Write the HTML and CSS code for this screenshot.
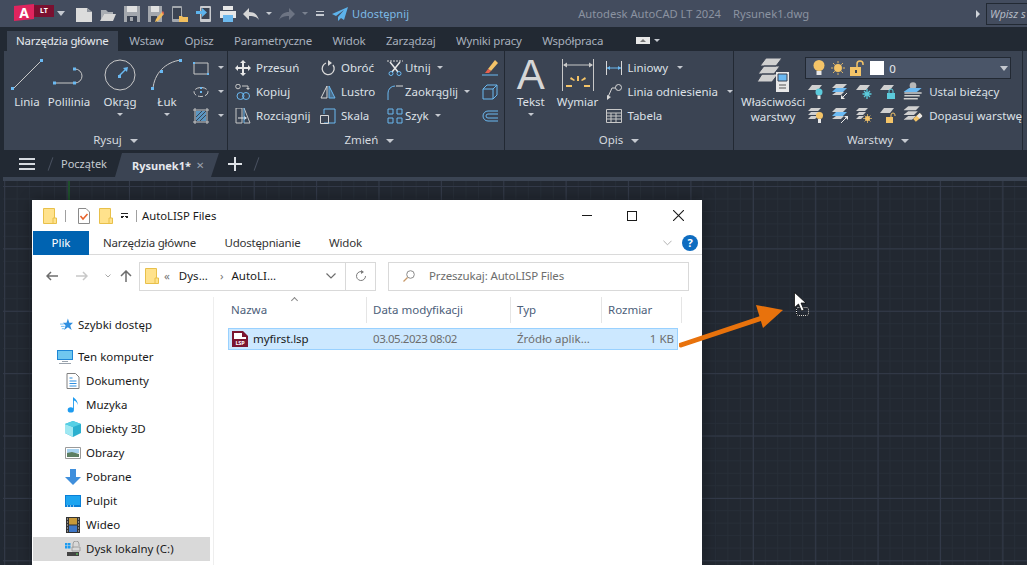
FILE: index.html
```html
<!DOCTYPE html>
<html lang="pl">
<head>
    <meta charset="UTF-8">
    <title>AutoCAD LT 2024</title>
    <link rel="stylesheet" href="styles.css">
</head>
<body>
<svg class="defs">
    <symbol id="i-new" viewBox="0 0 16 16"><path d="M0 2h11l5 4v10H0z" fill="#dcdcdc"/><path d="M11 2l5 4h-5z" fill="#8d929b"/></symbol>
    <symbol id="i-open" viewBox="0 0 16 16"><path d="M1 4h5l2 2h5v2H4l-3 6z" fill="#a9adb3"/><path d="M4 8h12l-3 7H0z" fill="#d6d6d6"/></symbol>
    <symbol id="i-save" viewBox="0 0 16 18"><path d="M0 1h16v16H0z" fill="#a3a7ad"/><path d="M3 1h10v6H3z" fill="#e0e0e0"/><path d="M3 11h10v6H3z" fill="#3b4352"/><path d="M6 12h3v4H6z" fill="#a3a7ad"/></symbol>
    <symbol id="i-saveas" viewBox="0 0 16 18"><path d="M0 1h14v16H0z" fill="#a3a7ad"/><path d="M3 1h8v6H3z" fill="#e0e0e0"/><path d="M3 11h6v6H3z" fill="#3b4352"/><path d="M8 14l6-7 2 2-6 7-3 1z" fill="#f2bf5e"/><path d="M14 7l1-1 1 2-1 2z" fill="#e8604c"/></symbol>
    <symbol id="i-phone-open" viewBox="0 0 16 18"><rect x="0" y="1" width="10" height="16" rx="1" fill="#a3a7ad"/><path d="M1 3h8v11H1z" fill="#3b4352"/><path d="M7 11h3l1 1h5v5H7z" fill="#f2bf5e"/></symbol>
    <symbol id="i-phone-save" viewBox="0 0 16 18"><rect x="4" y="1" width="11" height="16" rx="1" fill="#c9cbcf"/><path d="M5.500 3h8v11h-8z" fill="#3b4352"/><path d="M0 6h6V3l5 4.500L6 12V9H0z" fill="#5db3ec"/></symbol>
    <symbol id="i-print" viewBox="0 0 16 16"><path d="M3 0h10v4H3z" fill="#e8e8e8"/><path d="M0 5h16v7H0z" fill="#e8e8e8"/><path d="M3 9h10v7H3z" fill="#6db9ee"/></symbol>
    <symbol id="i-undo" viewBox="0 0 16 12"><path d="M6 0v4c5 0 8 2 10 8-2-3-5-4-10-4v4L0 6z" fill="#d6d6d6"/></symbol>
    <symbol id="i-redo" viewBox="0 0 16 12"><path d="M10 0v4C5 4 2 6 0 12c2-3 5-4 10-4v4l6-6z" fill="#6d7483"/></symbol>
    <symbol id="i-plane" viewBox="0 0 16 14"><path d="M16 0L0 7l4 2 8-6-6 7v4l3-3 3 2z" fill="#5db3ec"/></symbol>

    <symbol id="i-line" viewBox="0 0 32 32"><path d="M2 30L30 2" stroke="#c8c8c8" fill="none"/><path d="M0 28h3v3H0zM29 0h3v3h-3z" fill="#6ab9f2"/></symbol>
    <symbol id="i-pline" viewBox="0 0 32 32"><path d="M1 24h21a7 7 0 0 0 0-14h-2" stroke="#c8c8c8" fill="none"/><path d="M0 22.500h3v3H0zM20 22.500h3v3h-3zM20 8.500h3v3h-3z" fill="#6ab9f2"/></symbol>
    <symbol id="i-circle" viewBox="0 0 32 32"><circle cx="16" cy="16" r="15" stroke="#c8c8c8" fill="none"/><path d="M15 17l7-7" stroke="#6ab9f2" stroke-width="1.500"/><path d="M24 8l-5 1 4 4z" fill="#6ab9f2"/><path d="M14 16h3v3h-3z" fill="#6ab9f2"/></symbol>
    <symbol id="i-arc" viewBox="0 0 32 32"><path d="M2 30C3 15 14 3 30 1" stroke="#c8c8c8" fill="none"/><path d="M0 28h3v3H0zM9 11h3v3H9zM28 0h3v3h-3z" fill="#6ab9f2"/></symbol>
    <symbol id="i-rect" viewBox="0 0 16 16"><path d="M1 3h14v11H1z" stroke="#c8c8c8" fill="none"/><path d="M0 2h2v2H0zM14 13h2v2h-2z" fill="#6ab9f2"/></symbol>
    <symbol id="i-ellipse" viewBox="0 0 16 16"><ellipse cx="8" cy="8" rx="7" ry="4.500" stroke="#c8c8c8" fill="none" stroke-dasharray="5 2"/><path d="M7 3h2v2H7zM7 7h2v2H7z" fill="#6ab9f2"/></symbol>
    <symbol id="i-hatch" viewBox="0 0 16 16"><path d="M0 2h16M0 14h16M2 0v16M14 0v16" stroke="#c8c8c8" fill="none"/><path d="M3 3h10v10H3z" fill="#6ab9f2" opacity=".7"/><path d="M3 9l6-6M3 13l10-10M7 13l6-6" stroke="#3b4352"/></symbol>

    <symbol id="i-move" viewBox="0 0 16 16"><path d="M8 0l3 3H9v4h4V5l3 3-3 3V9H9v4h2l-3 3-3-3h2V9H3v2L0 8l3-3v2h4V3H5z" fill="#e8e8e8"/></symbol>
    <symbol id="i-copy" viewBox="0 0 16 16"><circle cx="3" cy="2.500" r="2.300" stroke="#c8c8c8" fill="none"/><path d="M7 2h6v3" stroke="#c8c8c8" fill="none"/><path d="M11 4l2 2 2-2z" fill="#c8c8c8"/><circle cx="5.500" cy="12" r="3.500" stroke="#6ab9f2" fill="none"/><circle cx="11" cy="12" r="3.500" stroke="#6ab9f2" fill="none"/></symbol>
    <symbol id="i-stretch" viewBox="0 0 16 16"><path d="M1 0h6v15H1zM9 0l6 15H9" stroke="#c8c8c8" fill="none"/><path d="M3 10h7" stroke="#e8e8e8"/><path d="M12 10l-3-2v4z" fill="#e8e8e8"/><path d="M9 0v15" stroke="#6ab9f2"/></symbol>
    <symbol id="i-rotate" viewBox="0 0 16 16"><path d="M6 3a6 6 0 1 0 7 2" stroke="#d8d8d8" stroke-width="1.300" fill="none"/><path d="M8 0l4 3-4 3z" fill="#d8d8d8"/></symbol>
    <symbol id="i-mirror" viewBox="0 0 16 16"><path d="M7 2v12H1z" stroke="#d8d8d8" fill="none"/><path d="M9 2v12h6z" stroke="#6ab9f2" fill="#6ab9f2" fill-opacity=".35"/></symbol>
    <symbol id="i-scale" viewBox="0 0 16 16"><path d="M4 1h11v14H4" stroke="#6ab9f2" fill="none"/><path d="M4 1v5" stroke="#6ab9f2"/><path d="M0.500 7.500h8v8h-8z" stroke="#d8d8d8" fill="none"/></symbol>
    <symbol id="i-trim" viewBox="0 0 16 16"><path d="M0 1h16" stroke="#d8d8d8" stroke-dasharray="2 1"/><path d="M3 2l8 10M13 2L5 12" stroke="#e8e8e8" stroke-width="1.500"/><circle cx="4" cy="13.500" r="2" stroke="#6ab9f2" fill="none"/><circle cx="12" cy="13.500" r="2" stroke="#6ab9f2" fill="none"/></symbol>
    <symbol id="i-fillet" viewBox="0 0 16 16"><path d="M1 16V9a7 7 0 0 1 7-7" stroke="#6ab9f2" fill="none"/><path d="M9 2h7" stroke="#d8d8d8"/></symbol>
    <symbol id="i-array" viewBox="0 0 16 16"><path d="M1 1h5v5H1zM10 1h5v5h-5zM1 10h5v5H1zM10 10h5v5h-5z" stroke="#6ab9f2" fill="none"/></symbol>
    <symbol id="i-erase" viewBox="0 0 16 16"><path d="M13 0l3 3-7 8-3-2z" fill="#f4c468"/><path d="M6 9l3 2-2 2H3z" fill="#e8604c"/><path d="M0 15h16" stroke="#6ab9f2"/></symbol>
    <symbol id="i-box" viewBox="0 0 16 16"><path d="M1 5h10v10H1zM1 5l4-4h10v10l-4 4M11 5l4-4" stroke="#6ab9f2" fill="none"/></symbol>
    <symbol id="i-offset" viewBox="0 0 16 16"><path d="M16 3H6a5 5 0 0 0 0 10h10M16 6H6a2 2 0 0 0 0 4h10" stroke="#6ab9f2" fill="none"/></symbol>

    <symbol id="i-dim" viewBox="0 0 32 32"><path d="M.500 0v32M31.500 0v32" stroke="#c8c8c8"/><path d="M2 6h28" stroke="#c8c8c8"/><path d="M1 6l4-2.500v5zM31 6l-4-2.500v5z" fill="#c8c8c8"/><path d="M15 17h2v5h-2zM8 20l1-2 4 3-1 1zM24 20l-1-2-4 3 1 1zM4 28h6v-2H4zM22 28h6v-2h-6z" fill="#f4c468"/></symbol>
    <symbol id="i-linear" viewBox="0 0 16 16"><path d="M.500 1v14M15.500 1v14" stroke="#d8d8d8"/><path d="M1 8h14" stroke="#6ab9f2"/><path d="M1 8l3-2v4zM15 8l-3-2v4z" fill="#6ab9f2"/></symbol>
    <symbol id="i-leader" viewBox="0 0 16 16"><circle cx="12.500" cy="3.500" r="3" stroke="#d8d8d8" fill="none"/><path d="M9.500 4H6L2 13" stroke="#d8d8d8" fill="none"/><path d="M1 16l0-5 4 2z" fill="#d8d8d8"/></symbol>
    <symbol id="i-table" viewBox="0 0 16 16"><path d="M.500 1.500h15v13H.500zM.500 5h15M.500 8h15M.500 11h15M5 5v9M10 5v9" stroke="#c8c8c8" fill="none"/></symbol>

    <symbol id="i-layers" viewBox="0 0 32 36"><path d="M9 0h16l-6 8H3zM7 8h16l-6 8H1zM5 16h16l-6 8H0z" fill="#d0d0d0" stroke="#3b4352"/><path d="M19 14h13v20H19z" fill="#e8e8e8"/><path d="M21 16h9v7h-9z" fill="#6ab9f2" stroke="#3b4352"/><path d="M22 27h7M22 30h7" stroke="#555"/></symbol>
    <symbol id="i-bulb" viewBox="0 0 12 16"><circle cx="6" cy="5.500" r="5.500" fill="#f4c468"/><path d="M3.500 11h5v4h-5z" fill="#e8e8e8"/></symbol>
    <symbol id="i-sun" viewBox="0 0 16 16"><circle cx="8" cy="8" r="4.500" fill="#f4c468"/><path d="M8 0v2.500M8 13.500V16M0 8h2.500M13.500 8H16M2.300 2.300l2 2M11.700 11.700l2 2M13.700 2.300l-2 2M4.300 11.700l-2 2" stroke="#f4c468"/></symbol>
    <symbol id="i-unlock" viewBox="0 0 14 16"><path d="M0 7h11v9H0z" fill="#f4c468"/><path d="M7 7V4a3 3 0 0 1 6 0v1" stroke="#f4c468" stroke-width="1.500" fill="none"/><path d="M5 10h2v3H5z" fill="#3b4352"/></symbol>
    <symbol id="i-lay-a" viewBox="0 0 16 16"><path d="M4 2h10l-4 5H0z" fill="#d0d0d0"/><circle cx="11" cy="9" r="3.500" fill="#5ccbdc"/><path d="M9.500 12.500h3V16h-3z" fill="#e8e8e8"/></symbol>
    <symbol id="i-lay-b" viewBox="0 0 16 16"><path d="M4 1h11l-4 4H0z" fill="#d0d0d0"/><path d="M4 5h11l-4 4H0z" fill="#6ab9f2"/><path d="M4 9h8l-3 3H0z" fill="#d0d0d0"/><path d="M15 10l-5 5" stroke="#e8e8e8"/><path d="M9 16v-4l4 4z" fill="#e8e8e8"/></symbol>
    <symbol id="i-lay-c" viewBox="0 0 16 16"><path d="M4 2h10l-4 5H0z" fill="#d0d0d0"/><path d="M11 6v10M6.500 11h9M8 8l6 6M14 8l-6 6" stroke="#5ccbdc" stroke-width="1.300"/></symbol>
    <symbol id="i-lay-d" viewBox="0 0 16 16"><path d="M4 2h10l-4 5H0z" fill="#d0d0d0"/><path d="M7 10h8v6H7z" fill="#5ccbdc"/><path d="M9 10V8a2 2 0 0 1 4 0v2" stroke="#5ccbdc" fill="none"/></symbol>
    <symbol id="i-lay-e" viewBox="0 0 20 18"><circle cx="10" cy="3.500" r="3.500" fill="#b8b8b8"/><path d="M6 6h13l-5 4H0z" fill="#6ab9f2"/><path d="M1 11h18M1 14h16M0 17h15" stroke="#d0d0d0" stroke-width="1.500"/></symbol>
    <symbol id="i-lay-f" viewBox="0 0 16 16"><path d="M3 1h10l-3 3H0zM3 5h9l-3 3H0zM3 9h7l-3 3H0z" fill="#d0d0d0"/><circle cx="11.500" cy="8.500" r="3.500" fill="#f4c468"/><path d="M10 12h3v4h-3z" fill="#e8e8e8"/></symbol>
    <symbol id="i-lay-g" viewBox="0 0 16 16"><path d="M4 1h11l-4 4H0z" fill="#d0d0d0"/><path d="M4 5h11l-4 4H0z" fill="#6ab9f2"/><path d="M4 9h8l-3 3H0z" fill="#d0d0d0"/><path d="M9 16l5-5" stroke="#e8e8e8"/><path d="M16 9v4l-4-4z" fill="#e8e8e8"/></symbol>
    <symbol id="i-lay-h" viewBox="0 0 16 16"><path d="M3 1h9l-3 3H0zM3 5h7l-3 3H0zM3 9h5l-3 3H0z" fill="#d0d0d0"/><circle cx="11.500" cy="11.500" r="2.500" fill="#f4c468"/><path d="M11.500 7v9M7 11.500h9M8.500 8.500l6 6M14.500 8.500l-6 6" stroke="#f4c468" stroke-width=".7"/></symbol>
    <symbol id="i-lay-i" viewBox="0 0 16 16"><path d="M4 1h10l-4 5H0z" fill="#d0d0d0"/><path d="M6 10h7v6H6z" fill="#f4c468"/><path d="M11 10V8a2 2 0 0 1 4 0v1" stroke="#f4c468" fill="none"/></symbol>
    <symbol id="i-lay-j" viewBox="0 0 20 18"><path d="M5 0h12l-4 4H0zM5 5h10l-4 4H0zM5 10h8l-4 4H0z" fill="#d0d0d0"/><path d="M10 13l7-6 3 3-7 6z" fill="#f4c468"/><path d="M14 10l3-3 3 3-3 3z" fill="#e8e8e8"/></symbol>

    <symbol id="e-folder" viewBox="0 0 14 16"><path d="M.500.500h11v15H.500z" fill="#ffe28c" stroke="#e8c04a"/><path d="M10 10h3.500v5.500H10z" fill="#ffe28c" stroke="#e8c04a"/></symbol>
    <symbol id="e-check" viewBox="0 0 12 16"><path d="M.500.500H8L11.500 4v11.500H.500z" fill="#fff" stroke="#8a8a8a"/><path d="M2.500 8l2.500 3 4.500-5" stroke="#e8622a" stroke-width="1.500" fill="none"/></symbol>
    <symbol id="e-star" viewBox="0 0 14 14"><path d="M8.500 0l1.500 4.500h4L11 7.500l1.500 5-4-3-4 3 1.500-5L3 4.500h4z" fill="#2f8fe0"/><path d="M0 6h4M1 8.500h4M2 11h3" stroke="#6ab9f2"/></symbol>
    <symbol id="e-pc" viewBox="0 0 16 16"><path d="M0 1h16v10H0z" fill="#1d86d6"/><path d="M1 2h14v8H1z" fill="#6fc7ef"/><path d="M5 12h6v1H5zM2 14h12v1H2z" fill="#9aa3ad"/></symbol>
    <symbol id="e-doc" viewBox="0 0 13 16"><path d="M.500.500H9L12.500 4v11.500H.500z" fill="#fff" stroke="#808080"/><path d="M3 5h3M3 8h7M3 10.500h7M3 13h7" stroke="#2f8fe0"/></symbol>
    <symbol id="e-note" viewBox="0 0 12 18"><ellipse cx="3.500" cy="14.500" rx="3.500" ry="3" fill="#1d9bf0"/><path d="M6 2v12H7V4c2 .500 4 2 4 5 1-3-1-6-5-9z" fill="#1d9bf0"/></symbol>
    <symbol id="e-cube" viewBox="0 0 16 16"><path d="M8 0l8 3v9l-8 4-8-4V3z" fill="#2bb0cf"/><path d="M0 3l8 3v10l-8-4z" fill="#9fe8f2"/><path d="M8 6l8-3-8-3-8 3z" fill="#56d0e5"/></symbol>
    <symbol id="e-pic" viewBox="0 0 16 12"><path d="M.500.500h15v11H.500z" fill="#fff" stroke="#9a9a9a"/><path d="M2 2h12v4H2z" fill="#a8d3f0"/><path d="M2 6l5-1 7 2v3H2z" fill="#5d7f63"/></symbol>
    <symbol id="e-down" viewBox="0 0 16 16"><path d="M5 0h6v8h5l-8 8-8-8h5z" fill="#3f8fdc"/></symbol>
    <symbol id="e-desk" viewBox="0 0 16 12"><path d="M0 0h16v12H0z" fill="#0a7fd6"/><path d="M1 1h14v9H1z" fill="#1ea5f0"/><path d="M2 11h1M5 11h1M8 11h1" stroke="#fff"/></symbol>
    <symbol id="e-film" viewBox="0 0 14 16"><path d="M0 0h14v16H0z" fill="#333"/><path d="M3 1h8v6.500H3z" fill="#c89a3a"/><path d="M3 8.500h8V15H3z" fill="#3f78c8"/><path d="M1 2h1M1 5h1M1 8h1M1 11h1M1 14h1M12 2h1M12 5h1M12 8h1M12 11h1M12 14h1" stroke="#ddd"/></symbol>
    <symbol id="e-disk" viewBox="0 0 16 16"><path d="M0 2h2.500v2.500H0zM3 2h2.500v2.500H3zM0 5h2.500v2.500H0zM3 5h2.500v2.500H3z" fill="#1d9bf0"/><path d="M8 7V3a3 3 0 0 1 6 0v2M7 6h8v4H7z" stroke="#a0a0a0" fill="none"/><path d="M2 11h12v4H2z" fill="#444"/><path d="M11 12.500h2v1h-2z" fill="#5fe05f"/></symbol>
    <symbol id="e-lsp" viewBox="0 0 16 16"><path d="M0 0h11l5 5v11H0z" fill="#7b1530"/><path d="M2 2h8v4h4v2H2z" fill="#fff"/></symbol>
</svg>

<header class="titlebar">
    <div class="logo"><span class="logo-a">A</span><span class="logo-lt">LT</span></div>
    <span class="caret caret-logo"></span>
    <div class="qat">
        <svg class="qi"><use href="#i-new"/></svg>
        <svg class="qi"><use href="#i-open"/></svg>
        <svg class="qi"><use href="#i-save"/></svg>
        <svg class="qi"><use href="#i-saveas"/></svg>
        <svg class="qi"><use href="#i-phone-open"/></svg>
        <svg class="qi"><use href="#i-phone-save"/></svg>
        <svg class="qi"><use href="#i-print"/></svg>
        <svg class="qi qi-arrow"><use href="#i-undo"/></svg>
        <span class="caret caret-small"></span>
        <svg class="qi qi-arrow"><use href="#i-redo"/></svg>
        <span class="caret caret-small caret-dim"></span>
        <span class="qat-more"></span>
        <svg class="qi qi-plane"><use href="#i-plane"/></svg>
        <span class="share">Udostępnij</span>
    </div>
    <div class="app-title"><span>Autodesk AutoCAD LT 2024</span><span>Rysunek1.dwg</span></div>
    <span class="caret-right"></span>
    <div class="search-box">Wpisz s</div>
</header>

<nav class="ribbon-tabs">
    <span class="rtab rtab-active">Narzędzia główne</span>
    <span class="rtab">Wstaw</span>
    <span class="rtab">Opisz</span>
    <span class="rtab">Parametryczne</span>
    <span class="rtab">Widok</span>
    <span class="rtab">Zarządzaj</span>
    <span class="rtab">Wyniki pracy</span>
    <span class="rtab">Współpraca</span>
    <span class="rtab-toggle"><i></i></span>
    <span class="caret caret-small"></span>
</nav>

<section class="ribbon">
    <div class="panel panel-draw">
        <div class="panel-body">
            <div class="large lg-line"><svg class="li"><use href="#i-line"/></svg><span>Linia</span></div>
            <div class="large lg-pline"><svg class="li"><use href="#i-pline"/></svg><span>Polilinia</span></div>
            <div class="large lg-circle"><svg class="li"><use href="#i-circle"/></svg><span>Okrąg</span><span class="caret caret-small"></span></div>
            <div class="large lg-arc"><svg class="li"><use href="#i-arc"/></svg><span>Łuk</span><span class="caret caret-small"></span></div>
            <div class="tool-col col-shapes">
                <div class="tool"><svg class="si"><use href="#i-rect"/></svg><span class="caret caret-small"></span></div>
                <div class="tool"><svg class="si"><use href="#i-ellipse"/></svg><span class="caret caret-small"></span></div>
                <div class="tool"><svg class="si"><use href="#i-hatch"/></svg><span class="caret caret-small"></span></div>
            </div>
        </div>
        <div class="panel-title">Rysuj <span class="caret"></span></div>
    </div>

    <div class="panel panel-modify">
        <div class="panel-body">
            <div class="tool-col col-move">
                <div class="tool"><svg class="si"><use href="#i-move"/></svg>Przesuń</div>
                <div class="tool"><svg class="si"><use href="#i-copy"/></svg>Kopiuj</div>
                <div class="tool"><svg class="si"><use href="#i-stretch"/></svg>Rozciągnij</div>
            </div>
            <div class="tool-col col-rotate">
                <div class="tool"><svg class="si"><use href="#i-rotate"/></svg>Obróć</div>
                <div class="tool"><svg class="si"><use href="#i-mirror"/></svg>Lustro</div>
                <div class="tool"><svg class="si"><use href="#i-scale"/></svg>Skala</div>
            </div>
            <div class="tool-col col-trim">
                <div class="tool"><svg class="si"><use href="#i-trim"/></svg>Utnij <span class="caret caret-small"></span></div>
                <div class="tool"><svg class="si"><use href="#i-fillet"/></svg>Zaokrąglij <span class="caret caret-small"></span></div>
                <div class="tool"><svg class="si"><use href="#i-array"/></svg>Szyk <span class="caret caret-small"></span></div>
            </div>
            <div class="tool-col">
                <div class="tool"><svg class="si"><use href="#i-erase"/></svg></div>
                <div class="tool"><svg class="si"><use href="#i-box"/></svg></div>
                <div class="tool"><svg class="si"><use href="#i-offset"/></svg></div>
            </div>
        </div>
        <div class="panel-title">Zmień <span class="caret"></span></div>
    </div>

    <div class="panel panel-notes">
        <div class="panel-body">
            <div class="large lg-text"><span class="big-a">A</span><span>Tekst</span><span class="caret caret-small"></span></div>
            <div class="large lg-dim"><svg class="li"><use href="#i-dim"/></svg><span>Wymiar</span></div>
            <div class="tool-col">
                <div class="tool"><svg class="si"><use href="#i-linear"/></svg>Liniowy <span class="caret caret-small"></span></div>
                <div class="tool"><svg class="si"><use href="#i-leader"/></svg>Linia odniesienia <span class="caret caret-small"></span></div>
                <div class="tool"><svg class="si"><use href="#i-table"/></svg>Tabela</div>
            </div>
        </div>
        <div class="panel-title">Opis <span class="caret"></span></div>
    </div>

    <div class="panel panel-layers">
        <div class="panel-body">
            <div class="large lg-layers"><svg class="li li-layers"><use href="#i-layers"/></svg><span>Właściwości</span><span>warstwy</span></div>
            <div class="layer-tools">
                <div class="layer-combo">
                    <svg class="ci"><use href="#i-bulb"/></svg>
                    <svg class="ci"><use href="#i-sun"/></svg>
                    <svg class="ci"><use href="#i-unlock"/></svg>
                    <span class="swatch"></span>
                    <span class="layer-name">0</span>
                    <span class="caret caret-combo"></span>
                </div>
                <div class="layer-row">
                    <svg class="si"><use href="#i-lay-a"/></svg>
                    <svg class="si"><use href="#i-lay-b"/></svg>
                    <svg class="si"><use href="#i-lay-c"/></svg>
                    <svg class="si"><use href="#i-lay-d"/></svg>
                    <svg class="si si-wide"><use href="#i-lay-e"/></svg>
                    <span>Ustal bieżący</span>
                </div>
                <div class="layer-row">
                    <svg class="si"><use href="#i-lay-f"/></svg>
                    <svg class="si"><use href="#i-lay-g"/></svg>
                    <svg class="si"><use href="#i-lay-h"/></svg>
                    <svg class="si"><use href="#i-lay-i"/></svg>
                    <svg class="si si-wide"><use href="#i-lay-j"/></svg>
                    <span>Dopasuj warstwę</span>
                </div>
            </div>
        </div>
        <div class="panel-title">Warstwy <span class="caret"></span></div>
    </div>
    <div class="panel panel-stub"></div>
</section>

<div class="doc-tabs">
    <span class="burger"></span>
    <span class="slash"></span>
    <span class="dtab">Początek</span>
    <span class="dtab-active"><b>Rysunek1*</b><span class="dtab-close">✕</span></span>
    <span class="plus"></span>
    <span class="slash"></span>
</div>

<main class="canvas">
    <div class="canvas-strip"></div>
    <span class="y-axis"></span>

    <div class="explorer">
        <div class="ex-title">
            <svg class="ex-i"><use href="#e-folder"/></svg>
            <span class="ex-sep"></span>
            <svg class="ex-i ex-check"><use href="#e-check"/></svg>
            <svg class="ex-i ex-folder2"><use href="#e-folder"/></svg>
            <span class="ex-down"></span>
            <span class="ex-sep"></span>
            <span class="ex-name">AutoLISP Files</span>
            <div class="win-btns">
                <span class="win-min"></span>
                <span class="win-max"></span>
                <svg class="win-close" viewBox="0 0 10 10"><path d="M0 0l10 10M10 0L0 10" stroke="#1a1a1a" fill="none"/></svg>
            </div>
        </div>
        <div class="ex-tabs">
            <span class="ex-plik">Plik</span>
            <span class="ex-tab">Narzędzia główne</span>
            <span class="ex-tab">Udostępnianie</span>
            <span class="ex-tab">Widok</span>
            <svg class="ex-chev" viewBox="0 0 10 6"><path d="M.500.500L5 5 9.500.500" stroke="#a8a8a8" fill="none"/></svg>
            <span class="ex-help">?</span>
        </div>
        <div class="ex-nav">
            <svg class="nav-arrow" viewBox="0 0 12 10"><path d="M12 5H1M5 1L1 5l4 4" stroke="#6d6d6d" stroke-width="1.500" fill="none"/></svg>
            <svg class="nav-arrow nav-off" viewBox="0 0 12 10"><path d="M0 5h11M7 1l4 4-4 4" stroke="#c8c8c8" stroke-width="1.500" fill="none"/></svg>
            <svg class="nav-drop" viewBox="0 0 6 4"><path d="M.500.500L3 3 5.500.500" stroke="#a8a8a8" fill="none"/></svg>
            <svg class="nav-up" viewBox="0 0 12 12"><path d="M6 12V1M1 6l5-5 5 5" stroke="#6d6d6d" stroke-width="1.500" fill="none"/></svg>
            <div class="address">
                <svg class="ex-i"><use href="#e-folder"/></svg>
                <span class="crumb-more">«</span>
                <span class="crumb">Dys...</span>
                <span class="crumb-sep">›</span>
                <span class="crumb crumb-last">AutoLI...</span>
                <svg class="addr-chev" viewBox="0 0 10 6"><path d="M.500.500L5 5 9.500.500" stroke="#6d6d6d" stroke-width="1.200" fill="none"/></svg>
                <span class="addr-refresh">
                    <svg viewBox="0 0 12 12"><path d="M8 2a4.500 4.500 0 1 0 2.500 4" stroke="#7a7a7a" fill="none"/><path d="M6 0l3 2-3 2z" fill="#7a7a7a"/></svg>
                </span>
            </div>
            <div class="ex-search">
                <svg viewBox="0 0 12 12"><circle cx="7.500" cy="4.500" r="3.800" stroke="#8a8a8a" fill="none"/><path d="M4.500 7.500L.500 11.500" stroke="#c89a6a" stroke-width="1.300"/></svg>
                Przeszukaj: AutoLISP Files
            </div>
        </div>
        <div class="ex-body">
            <aside class="tree">
                <div class="tree-row tree-top tree-quick"><svg class="ti"><use href="#e-star"/></svg>Szybki dostęp</div>
                <div class="tree-row tree-top tree-pc"><svg class="ti"><use href="#e-pc"/></svg>Ten komputer</div>
                <div class="tree-row"><svg class="ti"><use href="#e-doc"/></svg>Dokumenty</div>
                <div class="tree-row"><svg class="ti"><use href="#e-note"/></svg>Muzyka</div>
                <div class="tree-row"><svg class="ti"><use href="#e-cube"/></svg>Obiekty 3D</div>
                <div class="tree-row"><svg class="ti"><use href="#e-pic"/></svg>Obrazy</div>
                <div class="tree-row"><svg class="ti"><use href="#e-down"/></svg>Pobrane</div>
                <div class="tree-row"><svg class="ti"><use href="#e-desk"/></svg>Pulpit</div>
                <div class="tree-row"><svg class="ti"><use href="#e-film"/></svg>Wideo</div>
                <div class="tree-row tree-sel"><svg class="ti"><use href="#e-disk"/></svg>Dysk lokalny (C:)</div>
            </aside>
            <div class="files">
                <div class="file-head">
                    <span class="sort-up"></span>
                    <span>Nazwa</span>
                    <span>Data modyfikacji</span>
                    <span>Typ</span>
                    <span>Rozmiar</span>
                </div>
                <div class="file-row">
                    <span class="file-name"><span class="lsp-icon"><svg><use href="#e-lsp"/></svg><b>LSP</b></span>myfirst.lsp</span>
                    <span class="file-date">03.05.2023 08:02</span>
                    <span>Źródło aplik...</span>
                    <span class="file-size">1 KB</span>
                </div>
            </div>
        </div>
    </div>

    <svg class="callout" width="120" height="60" viewBox="0 0 120 60">
        <path d="M2 47L86 19" stroke="#e8720c" stroke-width="5" stroke-linecap="round"/>
        <path d="M104 12L77 7l7 23z" fill="#e8720c"/>
    </svg>
    <svg class="drag-cursor" width="18" height="28" viewBox="0 0 18 28">
        <rect x="2.500" y="15.500" width="12" height="8" rx="2" fill="none" stroke="#000"/>
        <rect x="2.500" y="15.500" width="12" height="8" rx="2" fill="none" stroke="#fff" stroke-dasharray="1 1"/>
        <path d="M.500.500v15l4-3.500 3 7 2.500-1-3-7h5z" fill="#fff" stroke="#000" stroke-width=".7"/>
    </svg>
</main>
</body>
</html>
```

FILE: styles.css
```css
* {
    box-sizing: border-box;
}

html, body {
    height: 100%;
}

body {
    margin: 0;
    display: flex;
    flex-direction: column;
    overflow: hidden;
    background: #222933;
    color: #dde1e7;
    font-family: "Noto Sans", "Open Sans", sans-serif;
    font-size: 11.5px;
}

.defs {
    display: none;
}

/* small triangles */
.caret {
    display: inline-block;
    width: 0;
    height: 0;
    border-left: 4px solid transparent;
    border-right: 4px solid transparent;
    border-top: 4px solid #c5c9d0;
}

.caret-small {
    border-left-width: 3px;
    border-right-width: 3px;
    border-top-width: 3px;
}

.caret-dim {
    border-top-color: #7a818f;
}

/* title bar */
.titlebar {
    height: 27px;
    flex: none;
    display: flex;
    align-items: center;
    padding-left: 14px;
    background: #434c5e;
}

.logo {
    display: flex;
    align-items: flex-start;
    width: 40px;
    height: 17px;
    margin-top: -2px;
    font-weight: 700;
    color: #fff;
}

.logo-a {
    width: 20px;
    height: 17px;
    background: #e0245e;
    clip-path: polygon(0 2px, 100% 0, 100% 15px, 0 100%);
    font-size: 14px;
    line-height: 17px;
    text-align: center;
}

.logo-lt {
    width: 20px;
    height: 12px;
    margin-top: 1px;
    background: #7a1030;
    font-size: 7px;
    line-height: 12px;
    text-align: center;
}

.caret-logo {
    margin-left: 3px;
    border-top-width: 5px;
}

.qat {
    display: flex;
    align-items: center;
    gap: 8px;
    margin-left: 11px;
}

.qi {
    width: 16px;
    height: 18px;
}

.qi-arrow {
    height: 12px;
}

.qi + .qi-arrow {
    margin-left: -1px;
}

.qat .caret-small {
    margin: 0 -1px 0 -1px;
}

.qat-more {
    width: 8px;
    height: 6px;
    margin-left: 1px;
    border-top: 1px solid #c5c9d0;
    background: linear-gradient(#c5c9d0, #c5c9d0) 0 2px / 8px 2px no-repeat;
}

.qi-plane {
    height: 14px;
}

.share {
    margin-left: -4px;
    color: #7dbbe6;
    font-size: 11px;
    letter-spacing: .1px;
}

.app-title {
    display: flex;
    gap: 12px;
    margin-left: 169px;
    color: #8b93a1;
    font-size: 11.2px;
}

.caret-right {
    margin-left: 167px;
    border-top: 4px solid transparent;
    border-bottom: 4px solid transparent;
    border-left: 4px solid #d0d4da;
}

.search-box {
    flex: 1;
    height: 22px;
    margin-left: 6px;
    padding-left: 3px;
    overflow: hidden;
    border: 1px solid #222933;
    border-right: 0;
    background: #434c5e;
    color: #b4bac4;
    font-style: italic;
    font-size: 11px;
    line-height: 20px;
    white-space: nowrap;
}

/* ribbon tabs */
.ribbon-tabs {
    height: 24px;
    flex: none;
    display: flex;
    align-items: flex-end;
    padding-left: 7px;
    background: #222933;
}

.rtab {
    height: 20px;
    padding: 0 10.3px;
    color: #a8b0bd;
    letter-spacing: -.22px;
    line-height: 20px;
    white-space: nowrap;
}

.rtab-active {
    width: 111px;
    margin-right: 1px;
    padding: 0 0 0 9px;
    background: #3b4453;
    color: #e6e9ee;
}

.rtab-toggle {
    display: flex;
    align-items: center;
    justify-content: center;
    width: 14px;
    height: 7px;
    margin: 0 4px 7px 23px;
    background: #e8e8e8;
}

.rtab-toggle i {
    width: 0;
    height: 0;
    border-left: 3px solid transparent;
    border-right: 3px solid transparent;
    border-bottom: 3px solid #777;
}

.ribbon-tabs .caret-small {
    margin-bottom: 9px;
}

/* ribbon panels */
.ribbon {
    height: 99px;
    flex: none;
    display: flex;
    gap: 1px;
    padding-left: 4px;
    background: #222933;
}

.panel {
    display: flex;
    flex-direction: column;
    background: #3b4453;
}

.panel-draw { width: 223px; }
.panel-modify { width: 276px; padding-left: 7px; }
.panel-notes { width: 228px; }
.panel-layers { width: 288px; }
.panel-stub { flex: 1; }

.panel-body {
    height: 79px;
    display: flex;
    padding-top: 5px;
}

.panel-title {
    height: 20px;
    color: #d5d9df;
    text-align: center;
    line-height: 20px;
}

.panel-title .caret {
    margin-left: 5px;
    vertical-align: 1px;
}

.large {
    display: flex;
    flex-direction: column;
    align-items: center;
    padding-top: 3px;
    white-space: nowrap;
}

.large span:not(.caret) {
    line-height: 20px;
}

.large .caret {
    margin-top: 1px;
}

.li {
    width: 32px;
    height: 32px;
    flex: none;
    margin-bottom: 1px;
}

.lg-line { width: 46px; }
.lg-pline { width: 38px; }
.lg-circle { width: 64px; }
.lg-arc { width: 30px; }
.lg-text { width: 52px; }
.lg-dim { width: 42px; }
.lg-layers { width: 80px; }

.li-layers {
    height: 36px;
    margin-top: -1px;
    margin-bottom: 0;
}

.lg-layers span:not(.caret) {
    line-height: 15px;
}

.big-a {
    height: 32px;
    margin-bottom: 1px;
    color: #d6d6d6;
    font-family: "Liberation Sans", sans-serif;
    font-size: 42px;
    line-height: 32px !important;
}

.tool-col {
    display: flex;
    flex-direction: column;
    white-space: nowrap;
}

/* the font sits 1px low: lift the text, keep the icon */
.tool {
    height: 24px;
    display: flex;
    align-items: center;
    gap: 5px;
    padding-bottom: 2px;
}

.tool .si {
    margin-top: 2px;
}

.tool .caret-small {
    margin-left: 4px;
}

.si {
    width: 16px;
    height: 16px;
    flex: none;
}

.col-shapes {
    padding-left: 11px;
}

.col-move { width: 85px; }
.col-rotate { width: 65px; }
.col-trim { width: 97px; padding-left: 2px; }

.col-trim .tool {
    gap: 2px;
}

.panel-notes .tool-col {
    padding-left: 8px;
}

.layer-tools {
    display: flex;
    flex-direction: column;
    margin-left: -7px;
    margin-top: 1px;
}

.layer-combo {
    width: 206px;
    height: 22px;
    display: flex;
    align-items: center;
    padding-left: 6px;
    border: 1px solid #222933;
    background: #4a5568;
    color: #e6e9ee;
}

.ci {
    width: 14px;
    height: 16px;
    margin-right: 5px;
}

.swatch {
    width: 14px;
    height: 14px;
    margin-left: 1px;
    background: #fff;
}

.layer-name {
    margin-left: 5px;
}

.caret-combo {
    margin-left: auto;
    margin-right: 2px;
    border-top-width: 5px;
}

.layer-row {
    height: 24px;
    display: flex;
    align-items: center;
    gap: 8px;
    padding-left: 3px;
    white-space: nowrap;
}

.layer-row:first-of-type {
    margin-top: 1px;
}

.si-wide {
    width: 16px;
    transform: scale(1.2);
    margin-left: 1px;
}

/* document tabs */
.doc-tabs {
    height: 27px;
    flex: none;
    display: flex;
    align-items: center;
    padding-left: 19px;
    background: #222933;
}

.burger {
    width: 16px;
    height: 12px;
    border-top: 2px solid #d5d9df;
    border-bottom: 2px solid #d5d9df;
    background: linear-gradient(#d5d9df, #d5d9df) 0 3px / 16px 2px no-repeat;
}

.slash {
    width: 1px;
    height: 14px;
    margin-left: 15px;
    background: #4a5261;
    transform: rotate(20deg);
}

.dtab {
    margin-left: 10px;
    color: #c5c9d0;
    font-size: 11px;
}

.dtab-active {
    width: 104px;
    height: 24px;
    display: flex;
    align-items: center;
    gap: 5px;
    margin: 3px 0 0 8px;
    padding-left: 17px;
    background: #3b4453;
    clip-path: polygon(7px 0, 100% 0, calc(100% - 8px) 100%, 0 100%);
    color: #e6e9ee;
    font-size: 11px;
}

.dtab-active b {
    font-weight: 700;
}

.dtab-close {
    color: #9aa1ad;
    font-size: 10px;
}

.plus {
    width: 14px;
    height: 14px;
    margin-left: 9px;
    background:
        linear-gradient(#dfe2e7, #dfe2e7) 6px 0 / 2px 14px no-repeat,
        linear-gradient(#dfe2e7, #dfe2e7) 0 6px / 14px 2px no-repeat;
}

.plus + .slash {
    margin-left: 14px;
}

/* drawing area */
.canvas {
    position: relative;
    flex: 1;
    overflow: hidden;
    margin-left: 3px;
    background-color: #222831;
    background-image:
        linear-gradient(#333a49 1px, transparent 1px),
        linear-gradient(90deg, #333a49 1px, transparent 1px),
        linear-gradient(#272e38 1px, transparent 1px),
        linear-gradient(90deg, #272e38 1px, transparent 1px);
    background-size: 62.4px 62.4px, 62.4px 62.4px, 12.48px 12.48px, 12.48px 12.48px;
    background-position: 0 9px, 1.2px 0, 0 9px, 1.2px 0;
}

.canvas-strip {
    height: 4px;
    background: #3b4453;
}

.y-axis {
    position: absolute;
    left: 65px;
    top: 4px;
    width: 2px;
    height: 19px;
    background: #1f4f2c;
}

.callout {
    position: absolute;
    left: 676px;
    top: 121px;
}

.drag-cursor {
    position: absolute;
    left: 791px;
    top: 115px;
}

/* explorer window */
.explorer {
    position: absolute;
    left: 29px;
    top: 23px;
    width: 670px;
    height: 365px;
    display: flex;
    flex-direction: column;
    padding-left: 1px;
    background: #fff;
    box-shadow: 0 0 12px rgba(0, 0, 0, .35);
    color: #1a1a1a;
    font-size: 11.5px;
}

.ex-title {
    height: 31px;
    flex: none;
    display: flex;
    align-items: center;
    padding-left: 10px;
}

.ex-i {
    width: 14px;
    height: 16px;
    flex: none;
}

.ex-sep {
    width: 1px;
    height: 12px;
    margin-left: 8px;
    background: #a0a0a0;
}

.ex-check {
    margin-left: 11px;
}

.ex-folder2 {
    margin-left: 8px;
}

.ex-down {
    width: 7px;
    height: 5px;
    margin-left: 8px;
    border-top: 1px solid #222;
    background: linear-gradient(135deg, #222 50%, transparent 50%) 0 2px / 4px 3px no-repeat,
                linear-gradient(225deg, #222 50%, transparent 50%) 3px 2px / 4px 3px no-repeat;
}

.ex-name {
    margin-left: 5px;
    font-size: 11.3px;
}

.win-btns {
    display: flex;
    align-items: center;
    margin-left: auto;
    padding-right: 18px;
    gap: 35px;
}

.win-min {
    width: 10px;
    height: 1px;
    background: #1a1a1a;
}

.win-max {
    width: 10px;
    height: 10px;
    border: 1px solid #1a1a1a;
}

.win-close {
    width: 11px;
    height: 11px;
    margin-left: 1px;
}

.ex-tabs {
    height: 24px;
    flex: none;
    display: flex;
    align-items: center;
    border-bottom: 1px solid #dadada;
}

.ex-plik {
    width: 56px;
    height: 24px;
    background: #0063b1;
    color: #fff;
    line-height: 24px;
    text-align: center;
}

.ex-tab {
    padding: 0 14.5px 0 14px;
    color: #333;
    letter-spacing: -.2px;
    white-space: nowrap;
}

.ex-chev {
    width: 9px;
    height: 6px;
    margin-left: auto;
}

.ex-help {
    width: 16px;
    height: 16px;
    margin: 0 4px 0 10px;
    border-radius: 50%;
    background: #0e6cc0;
    color: #fff;
    font-weight: 700;
    font-size: 11px;
    line-height: 16px;
    text-align: center;
}

.ex-nav {
    height: 42px;
    flex: none;
    display: flex;
    align-items: center;
    padding-left: 13px;
}

.nav-arrow {
    width: 12px;
    height: 10px;
}

.nav-off {
    margin-left: 18px;
}

.nav-drop {
    width: 6px;
    height: 4px;
    margin-left: 17px;
}

.nav-up {
    width: 12px;
    height: 12px;
    margin-left: 9px;
}

.address {
    width: 237px;
    height: 29px;
    display: flex;
    align-items: center;
    margin-left: 7px;
    padding-left: 5px;
    border: 1px solid #d9d9d9;
}

.crumb-more {
    margin: 0 0 2px 5px;
    color: #777;
}

.crumb {
    margin: 0 0 2px 9px;
}

.crumb-sep {
    margin: 0 0 2px 12px;
    color: #777;
}

.crumb-last {
    margin-left: 8px;
}

.addr-chev {
    width: 10px;
    height: 6px;
    margin-left: auto;
    margin-right: 9px;
}

.addr-refresh {
    width: 30px;
    height: 27px;
    display: flex;
    align-items: center;
    justify-content: center;
    border-left: 1px solid #d9d9d9;
}

.addr-refresh svg {
    width: 12px;
    height: 12px;
}

.ex-search {
    width: 301px;
    height: 29px;
    display: flex;
    align-items: center;
    gap: 14px;
    margin-left: 12px;
    padding: 0 0 2px 14px;
    border: 1px solid #d9d9d9;
    color: #6d6d6d;
    letter-spacing: -.15px;
}

.ex-search svg {
    width: 12px;
    height: 12px;
    margin-top: 2px;
}

.ex-body {
    flex: 1;
    display: flex;
}

.tree {
    width: 181px;
    flex: none;
    padding: 16px 3px 0 0;
    border-right: 1px solid #eee;
}

.tree-row {
    height: 24px;
    display: flex;
    align-items: center;
    gap: 5px;
    padding: 0 0 2px 32px;
    white-space: nowrap;
}

.ti {
    width: 16px;
    height: 16px;
    flex: none;
    margin-top: 2px;
}

.tree-top {
    padding-left: 24px;
}

.tree-quick {
    margin-bottom: 8px;
    padding-left: 27px;
}

.tree-quick .ti {
    width: 13px;
}

.tree-sel {
    background: #d9d9d9;
}

.files {
    flex: 1;
    position: relative;
}

.file-head {
    height: 24px;
    display: grid;
    grid-template-columns: 142px 144px 91px 80px;
    margin-left: 11px;
    color: #4c607a;
}

.file-head span:not(.sort-up) {
    padding-left: 6px;
    border-right: 1px solid #e5e5e5;
    line-height: 26px;
}

.sort-up {
    position: absolute;
    left: 78px;
    top: 1px;
    width: 5px;
    height: 5px;
    border-left: 1px solid #888;
    border-top: 1px solid #888;
    transform: rotate(45deg);
}

.file-row {
    width: 450px;
    height: 22px;
    display: grid;
    grid-template-columns: 139px 144px 91px 76px;
    align-items: center;
    margin: 7px 0 0 14px;
    border: 1px solid #99d1ff;
    background: #cce8ff;
    color: #6d6d6d;
}

.file-row > span {
    padding: 0 0 2px 5px;
    white-space: nowrap;
}

.file-row .file-name {
    display: flex;
    align-items: center;
    gap: 5px;
    padding-left: 3px;
    color: #1a1a1a;
    letter-spacing: -.1px;
}

.file-row .file-date {
    letter-spacing: -.45px;
}

.file-row .file-size {
    padding: 0 5px 2px 0;
    text-align: right;
}

.lsp-icon {
    position: relative;
    width: 16px;
    height: 16px;
    margin-top: 2px;
}

.lsp-icon svg {
    width: 16px;
    height: 16px;
}

.lsp-icon b {
    position: absolute;
    left: 1px;
    bottom: 0;
    width: 14px;
    color: #fff;
    font-size: 5.500px;
    line-height: 8px;
    text-align: center;
}
```
